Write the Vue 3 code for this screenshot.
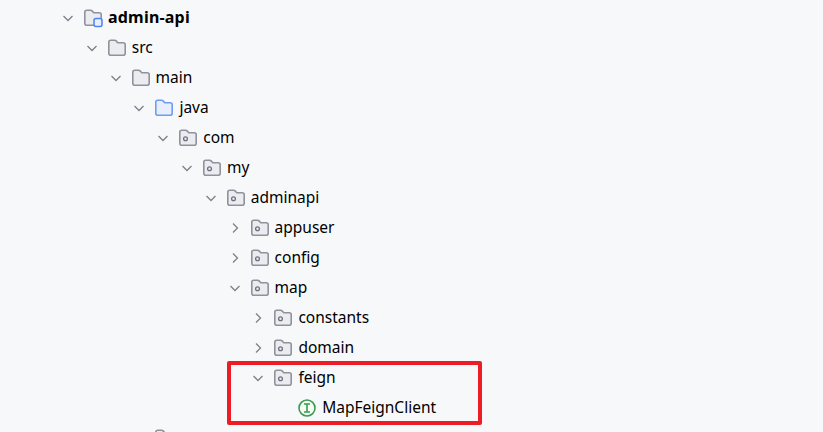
<script setup>
const rows = [
  { level: 0, name: 'admin-api', kind: 'module', open: true },
  { level: 1, name: 'src', kind: 'folder', open: true },
  { level: 2, name: 'main', kind: 'folder', open: true },
  { level: 3, name: 'java', kind: 'source', open: true },
  { level: 4, name: 'com', kind: 'package', open: true },
  { level: 5, name: 'my', kind: 'package', open: true },
  { level: 6, name: 'adminapi', kind: 'package', open: true },
  { level: 7, name: 'appuser', kind: 'package', open: false },
  { level: 7, name: 'config', kind: 'package', open: false },
  { level: 7, name: 'map', kind: 'package', open: true },
  { level: 8, name: 'constants', kind: 'package', open: false },
  { level: 8, name: 'domain', kind: 'package', open: false },
  { level: 8, name: 'feign', kind: 'package', open: true },
  { level: 9, name: 'MapFeignClient', kind: 'interface' },
  { level: 3, name: '', kind: 'folder', open: false, noArrow: true }
]
</script>

<template>
  <div class="page">
    <ul class="tree">
      <li
        v-for="(r, i) in rows"
        :key="i"
        class="row"
        :style="{ paddingLeft: 60 + r.level * 23.8 + 'px' }"
      >
        <span class="arrow">
          <svg v-if="r.kind !== 'interface' && !r.noArrow" width="16" height="16" viewBox="0 0 16 16" fill="none">
            <path v-if="r.open" d="M3.500 6 8 10.500 12.500 6" stroke="#7d818a" stroke-width="1.300" />
            <path v-else d="M6 3.500 10.500 8 6 12.500" stroke="#7d818a" stroke-width="1.300" />
          </svg>
        </span>
        <span class="icon">
          <svg v-if="r.kind === 'interface'" width="20" height="20" viewBox="0 0 20 20" fill="none">
            <circle cx="10" cy="10" r="8" fill="#f2fcf3" stroke="#3d9a50" stroke-width="1.600" />
            <path d="M7 6h6M7 14h6M10 6v8" stroke="#3d9a50" stroke-width="1.600" />
          </svg>
          <svg v-else width="20" height="20" viewBox="0 0 20 20" fill="none">
            <path
              d="M1.800 4.300c0-1.100.9-2 2-2h3.800c.6 0 1.100.2 1.500.6l1.700 1.800h5.400c1.100 0 2 .9 2 2v8.500c0 1.100-.9 2-2 2H3.800c-1.100 0-2-.9-2-2z"
              :fill="r.kind === 'source' ? '#e7effd' : '#ebecf0'"
              :stroke="r.kind === 'source' ? '#6f9bf2' : '#8f929b'"
              stroke-width="1.600"
            />
            <circle v-if="r.kind === 'package'" cx="7.500" cy="10.700" r="1.900" stroke="#6c707e" stroke-width="1.300" />
            <rect v-if="r.kind === 'module'" x="11" y="10.500" width="8" height="8" rx="2" fill="#e7effd" stroke="#4e82ee" stroke-width="1.500" />
          </svg>
        </span>
        <span class="label" :class="{ bold: r.kind === 'module' }">{{ r.name }}</span>
      </li>
    </ul>
    <div class="highlight"></div>
  </div>
</template>

<style scoped>
.page {
  position: relative;
  width: 823px;
  height: 432px;
  overflow: hidden;
  background: #f7f8fa;
  font-family: "Noto Sans", "Inter", sans-serif;
  color: #000;
}
.tree {
  list-style: none;
  margin: 0;
  padding: 3px 0 0;
}
.row {
  display: flex;
  align-items: center;
  height: 30px;
  box-sizing: border-box;
}
.arrow {
  display: flex;
  width: 16px;
  height: 16px;
  margin-right: 8px;
  flex: none;
}
.icon {
  display: flex;
  width: 20px;
  height: 20px;
  margin-right: 3px;
  margin-left: -1px;
  margin-top: -1px;
  flex: none;
}
.label {
  font-size: 15.500px;
  line-height: 30px;
  white-space: nowrap;
  margin-left: 2px;
  margin-bottom: 2px;
}
.bold {
  font-size: 16px;
  font-weight: 700;
  letter-spacing: 0.2px;
}
.highlight {
  position: absolute;
  left: 227px;
  top: 361px;
  width: 255px;
  height: 64px;
  box-sizing: border-box;
  border: 4px solid #ee1c25;
  border-radius: 2px;
}
</style>

<style>
html, body { margin: 0; background: #f7f8fa; }
</style>
